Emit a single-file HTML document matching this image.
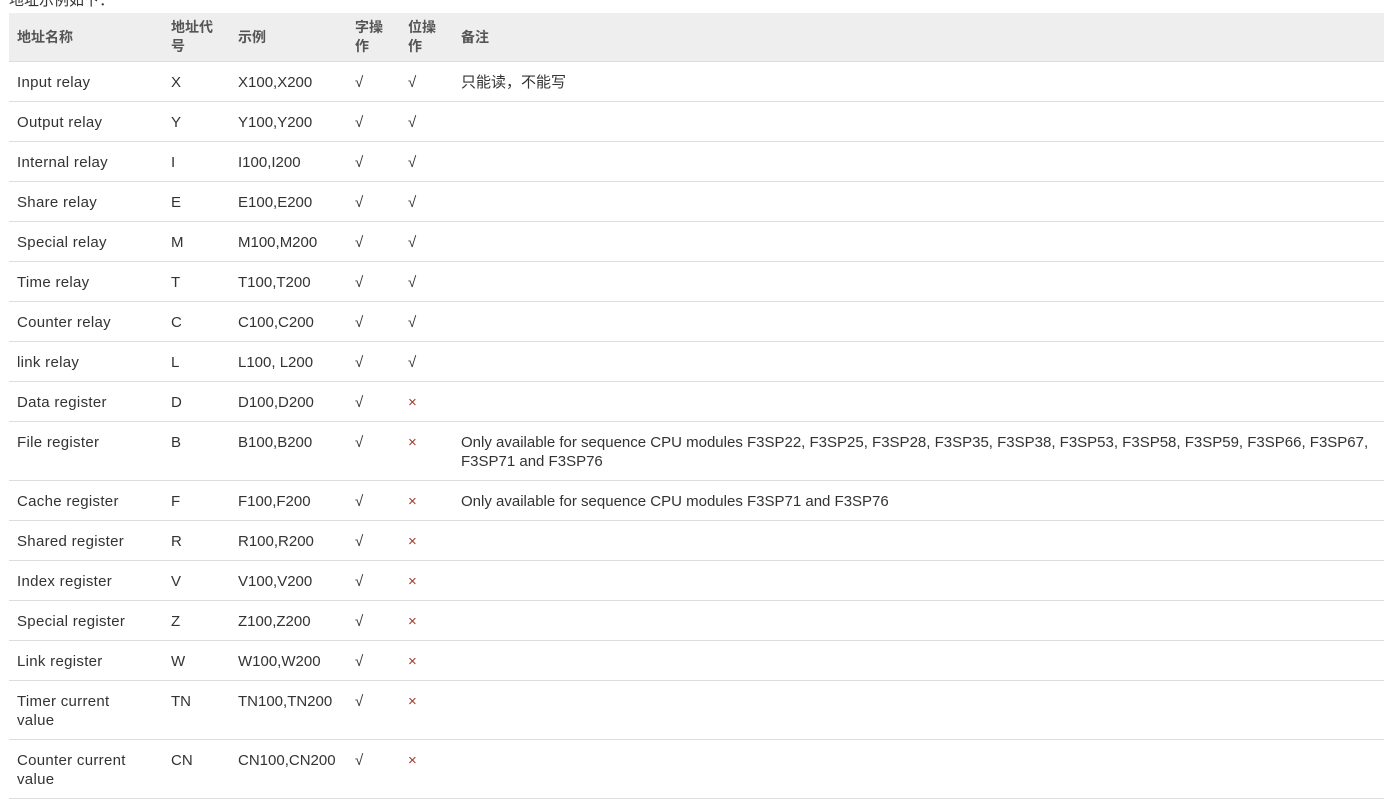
<!DOCTYPE html>
<html><head><meta charset="utf-8"><style>
body{margin:0;background:#fff;font-family:"Liberation Sans","Noto Sans CJK SC",sans-serif;font-size:15px;color:#333;width:1384px;height:798px;overflow:hidden;position:relative}
.t{position:absolute;left:9px;top:-9px;font-size:15px;line-height:19px}
table{position:absolute;left:9px;top:13px;width:1375px;border-collapse:collapse;table-layout:fixed}
th{background:#eee;text-align:left;font-weight:bold;color:#555;font-size:14px;line-height:19px;padding:5px 8px 5px;vertical-align:middle;border-bottom:1px solid #ddd}
td{line-height:19px;padding:11px 8px 9px;vertical-align:top;border-bottom:1px solid #ddd}
td:first-child{letter-spacing:0.3px}
.x{color:#a23b2a}
</style></head><body>
<div class="t">地址示例如下：</div>
<table>
<colgroup><col style="width:154px"><col style="width:67px"><col style="width:117px"><col style="width:53px"><col style="width:53px"><col></colgroup>
<tr><th>地址名称</th><th>地址代号</th><th>示例</th><th>字操作</th><th>位操作</th><th>备注</th></tr>
<tr><td>Input relay</td><td>X</td><td>X100,X200</td><td>√</td><td>√</td><td>只能读，不能写</td></tr>
<tr><td>Output relay</td><td>Y</td><td>Y100,Y200</td><td>√</td><td>√</td><td></td></tr>
<tr><td>Internal relay</td><td>I</td><td>I100,I200</td><td>√</td><td>√</td><td></td></tr>
<tr><td>Share relay</td><td>E</td><td>E100,E200</td><td>√</td><td>√</td><td></td></tr>
<tr><td>Special relay</td><td>M</td><td>M100,M200</td><td>√</td><td>√</td><td></td></tr>
<tr><td>Time relay</td><td>T</td><td>T100,T200</td><td>√</td><td>√</td><td></td></tr>
<tr><td>Counter relay</td><td>C</td><td>C100,C200</td><td>√</td><td>√</td><td></td></tr>
<tr><td>link relay</td><td>L</td><td>L100, L200</td><td>√</td><td>√</td><td></td></tr>
<tr><td>Data register</td><td>D</td><td>D100,D200</td><td>√</td><td class="x">×</td><td></td></tr>
<tr><td>File register</td><td>B</td><td>B100,B200</td><td>√</td><td class="x">×</td><td>Only available for sequence CPU modules F3SP22, F3SP25, F3SP28, F3SP35, F3SP38, F3SP53, F3SP58, F3SP59, F3SP66, F3SP67,<br>F3SP71 and F3SP76</td></tr>
<tr><td>Cache register</td><td>F</td><td>F100,F200</td><td>√</td><td class="x">×</td><td>Only available for sequence CPU modules F3SP71 and F3SP76</td></tr>
<tr><td>Shared register</td><td>R</td><td>R100,R200</td><td>√</td><td class="x">×</td><td></td></tr>
<tr><td>Index register</td><td>V</td><td>V100,V200</td><td>√</td><td class="x">×</td><td></td></tr>
<tr><td>Special register</td><td>Z</td><td>Z100,Z200</td><td>√</td><td class="x">×</td><td></td></tr>
<tr><td>Link register</td><td>W</td><td>W100,W200</td><td>√</td><td class="x">×</td><td></td></tr>
<tr><td>Timer current<br>value</td><td>TN</td><td>TN100,TN200</td><td>√</td><td class="x">×</td><td></td></tr>
<tr><td>Counter current<br>value</td><td>CN</td><td>CN100,CN200</td><td>√</td><td class="x">×</td><td></td></tr>
</table>
</body></html>
